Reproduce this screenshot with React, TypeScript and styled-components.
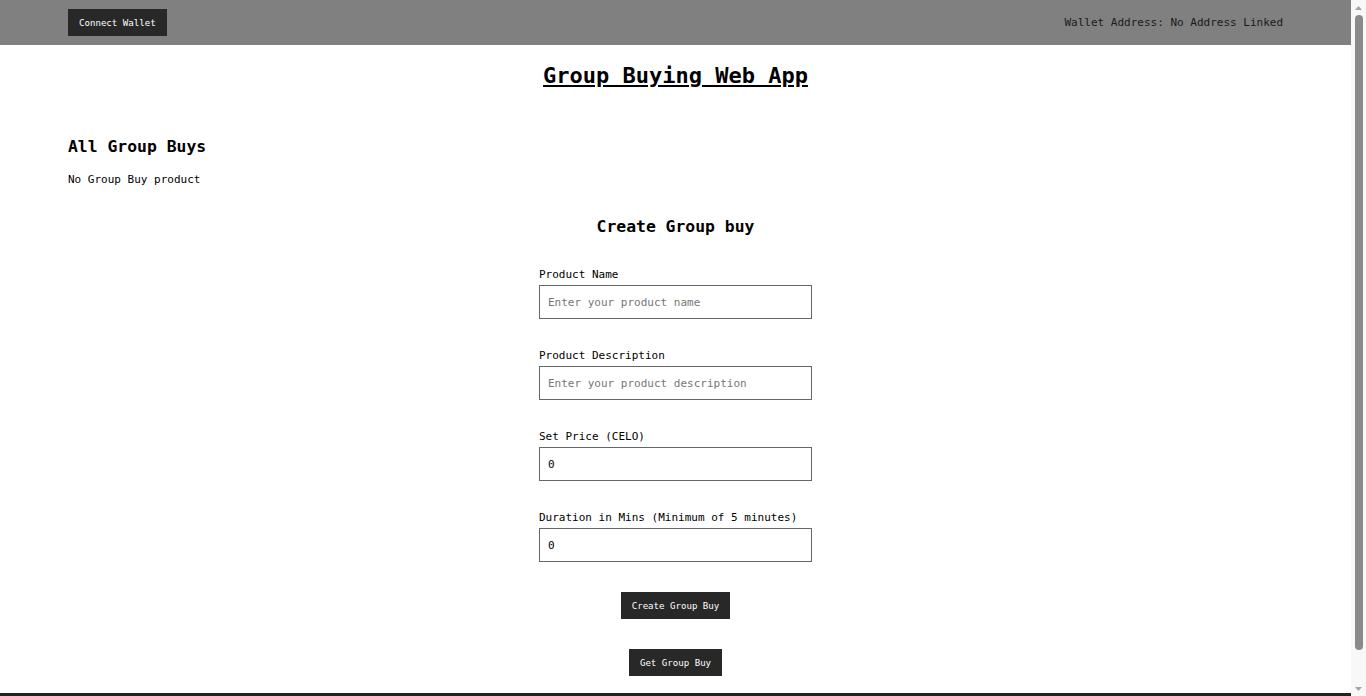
import styled, { createGlobalStyle } from "styled-components";

const GlobalStyle = createGlobalStyle`
  html, body {
    margin: 0;
    padding: 0;
    background: #fff;
    overflow: hidden;
  }
  body {
    font-family: "DejaVu Sans Mono", "Liberation Mono", monospace;
    font-size: 11px;
    color: #000;
  }
  * {
    box-sizing: border-box;
  }
`;

const fields = [
  { label: "Product Name", placeholder: "Enter your product name", value: "" },
  { label: "Product Description", placeholder: "Enter your product description", value: "" },
  { label: "Set Price (CELO)", placeholder: "", value: "0" },
  { label: "Duration in Mins (Minimum of 5 minutes)", placeholder: "", value: "0" },
];

const Arrow = ({ down }: { down?: boolean }) => (
  <ArrowBox>
    <svg width="7" height="4" viewBox="0 0 7 4">
      <path d={down ? "M0 0 L7 0 L3.5 4 Z" : "M0 4 L7 4 L3.5 0 Z"} fill="#a3a3a3" />
    </svg>
  </ArrowBox>
);

export default function App(): JSX.Element {
  return (
    <Shell>
      <GlobalStyle />
      <Page>
        <Header>
          <DarkButton>Connect Wallet</DarkButton>
          <WalletText>Wallet Address: No Address Linked</WalletText>
        </Header>
        <Main>
          <Title>Group Buying Web App</Title>
          <SectionTitle>All Group Buys</SectionTitle>
          <EmptyText>No Group Buy product</EmptyText>
          <FormTitle>Create Group buy</FormTitle>
          <Form>
            {fields.map((f) => (
              <Field key={f.label}>
                <Label>{f.label}</Label>
                <Input placeholder={f.placeholder} defaultValue={f.value} />
              </Field>
            ))}
          </Form>
          <Actions>
            <DarkButton>Create Group Buy</DarkButton>
            <DarkButton>Get Group Buy</DarkButton>
          </Actions>
        </Main>
        <Footer />
      </Page>
      <ScrollRail>
        <Arrow />
        <Track>
          <Thumb />
        </Track>
        <Arrow down />
      </ScrollRail>
    </Shell>
  );
}

const Shell = styled.div`
  height: 100vh;
  display: flex;
`;

const Page = styled.div`
  flex: 1;
  min-width: 0;
  overflow: hidden;
`;

const ScrollRail = styled.div`
  width: 15px;
  background: #f8f8f8;
  display: flex;
  flex-direction: column;
`;

const ArrowBox = styled.div`
  height: 15px;
  display: flex;
  align-items: center;
  justify-content: center;
`;

const Track = styled.div`
  flex: 1;
  display: flex;
  justify-content: center;
  padding-bottom: 31px;
`;

const Thumb = styled.div`
  width: 8px;
  height: 100%;
  background: #8a8a8a;
  border-radius: 4px;
`;

const Header = styled.header`
  height: 45px;
  background: #808080;
  padding: 0 68px;
  display: flex;
  justify-content: space-between;
  align-items: center;
`;

const DarkButton = styled.button`
  height: 27px;
  padding: 0 11px;
  background: #282828;
  color: #fff;
  border: none;
  font-family: "DejaVu Sans Mono", "Liberation Mono", monospace;
  font-size: 9.1px;
  cursor: pointer;
`;

const WalletText = styled.span`
  font-size: 11px;
  color: #1a1a1a;
`;

const Main = styled.main`
  padding: 0 68px 17px;
  display: flex;
  flex-direction: column;
`;

const Title = styled.h1`
  margin: 16px 0 0;
  font-size: 22px;
  line-height: 30px;
  text-align: center;
  text-decoration: underline;
  font-weight: bold;
`;

const SectionTitle = styled.h2`
  margin: 45px 0 0;
  font-size: 16.4px;
  line-height: 22px;
  font-weight: bold;
`;

const EmptyText = styled.p`
  margin: 15px 0 0;
  line-height: 14px;
`;

const FormTitle = styled.h2`
  margin: 29px 0 0;
  font-size: 16.4px;
  line-height: 22px;
  font-weight: bold;
  text-align: center;
`;

const Form = styled.div`
  width: 273px;
  margin: 30px auto 0;
  display: flex;
  flex-direction: column;
  gap: 30px;
`;

const Field = styled.label`
  display: flex;
  flex-direction: column;
  gap: 3px;
`;

const Label = styled.span`
  line-height: 14px;
`;

const Input = styled.input`
  height: 34px;
  width: 100%;
  border: 1px solid #666;
  padding: 0 8px;
  font-family: "DejaVu Sans Mono", "Liberation Mono", monospace;
  font-size: 11px;
  color: #000;
  outline: none;
  &::placeholder {
    color: #767676;
  }
`;

const Actions = styled.div`
  margin-top: 30px;
  display: flex;
  flex-direction: column;
  align-items: center;
  gap: 30px;
`;

const Footer = styled.footer`
  height: 37px;
  background: #222;
`;
